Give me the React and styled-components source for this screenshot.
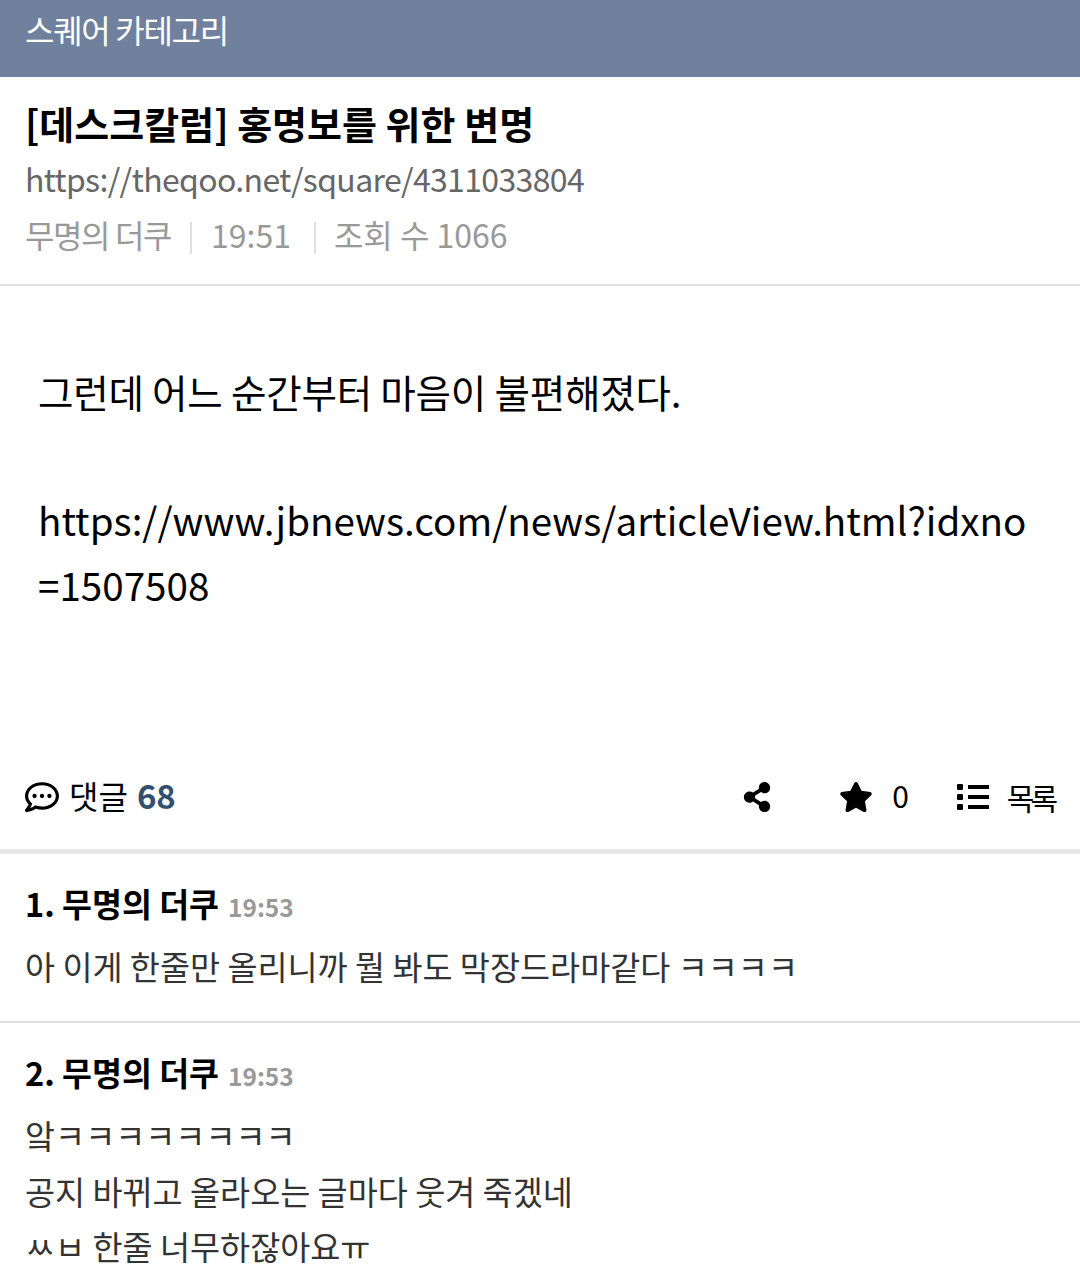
import React from 'react'
import styled, { createGlobalStyle } from 'styled-components'
import { FaRegCommentDots, FaShareAlt, FaStar } from 'react-icons/fa'

const Global = createGlobalStyle`
  html, body { margin: 0; padding: 0; background: #fff; }
  * { box-sizing: border-box; }
  body { font-family: "Noto Sans CJK KR", "Noto Sans", sans-serif; color: #000; }
`

const Page = styled.div`
  width: 1080px;
  height: 1283px;
  overflow: hidden;
`

const CategoryBar = styled.div`
  height: 77px;
  background: #6f819c;
  color: #fff;
  font-size: 32px;
  line-height: 58px;
  padding-left: 25px;
  letter-spacing: -1.3px;
`

const PostHead = styled.div`
  height: 209px;
  padding: 19px 25px 0;
  border-bottom: 2px solid #e0e0e0;
`

const Title = styled.div`
  font-size: 38px;
  font-weight: 700;
  line-height: 54px;
`

const Url = styled.div`
  font-size: 32px;
  line-height: 56px;
  color: #666;
  letter-spacing: -0.65px;
`

const Meta = styled.div`
  display: flex;
  align-items: center;
  font-size: 32px;
  line-height: 56px;
  color: #999;
`

const MetaName = styled.span`
  letter-spacing: -1.4px;
`

const MetaSep = styled.span`
  width: 2px;
  height: 32px;
  background: #e0e0e0;
  margin: 8px ${p => p.$right}px 0 ${p => p.$left}px;
`

const Body = styled.div`
  height: 480px;
  padding: 71px 38px 0;
  font-size: 38.6px;
  line-height: 65px;
  word-break: break-all;
`

const Sentence = styled.div`
  letter-spacing: -0.25px;
  margin: 2px 0 63px;
`

const ActionBar = styled.div`
  height: 62px;
  display: flex;
  align-items: center;
  padding: 0 26px 0 25px;
`

const CommentCount = styled.div`
  display: flex;
  align-items: center;
  font-size: 32px;
  flex: 1;
  margin-bottom: 4px;
  svg { font-size: 34px; margin: 4px 10px 0 0; }
  b { color: #34506f; margin-left: 9px; font-weight: 700; font-size: 33px; }
`

const ActionItem = styled.div`
  display: flex;
  align-items: center;
  font-size: 30px;
  margin-left: ${p => p.$left}px;
  svg { font-size: ${p => p.$icon}px; margin-right: ${p => p.$gap}px; }
`

const StarCount = styled.span`
  margin-bottom: 4px;
`

const ListLabel = styled.span`
  letter-spacing: -4px;
`

const ThickRule = styled.div`
  height: 5px;
  margin-top: 21px;
  background: #e8e8e8;
`

const Comment = styled.div`
  padding: 21px 25px 0;
  height: ${p => p.$h}px;
  border-bottom: ${p => (p.$last ? 'none' : '2px solid #e0e0e0')};
`

const CommentHead = styled.div`
  font-size: 32.5px;
  font-weight: 700;
  line-height: 56px;
  span { font-size: 24.5px; color: #999; margin-left: 9px; }
`

const CommentText = styled.div`
  font-size: 32.7px;
  line-height: 55.5px;
  color: #333;
  margin-top: 3px;
`

function ListIcon() {
  return (
    <svg width="32" height="26" viewBox="0 0 32 26" fill="currentColor">
      <rect x="0" y="0" width="6" height="6" rx="1" />
      <rect x="0" y="10" width="6" height="6" rx="1" />
      <rect x="0" y="20" width="6" height="6" rx="1" />
      <rect x="11" y="1" width="21" height="4" />
      <rect x="11" y="11" width="21" height="4" />
      <rect x="11" y="21" width="21" height="4" />
    </svg>
  )
}

export default function App() {
  return (
    <Page>
      <Global />
      <CategoryBar>스퀘어 카테고리</CategoryBar>
      <PostHead>
        <Title>[데스크칼럼] 홍명보를 위한 변명</Title>
        <Url>https://theqoo.net/square/4311033804</Url>
        <Meta>
          <MetaName>무명의 더쿠</MetaName>
          <MetaSep $left={19} $right={19} />
          19:51
          <MetaSep $left={23} $right={18} />
          조회 수 1066
        </Meta>
      </PostHead>
      <Body>
        <Sentence>그런데 어느 순간부터 마음이 불편해졌다.</Sentence>
        https://www.jbnews.com/news/articleView.html?idxno=1507508
      </Body>
      <ActionBar>
        <CommentCount>
          <FaRegCommentDots />
          댓글 <b>68</b>
        </CommentCount>
        <ActionItem $left={0} $icon={30} $gap={0}><FaShareAlt /></ActionItem>
        <ActionItem $left={67} $icon={34} $gap={19}><FaStar /><StarCount>0</StarCount></ActionItem>
        <ActionItem $left={48} $icon={34} $gap={18}><ListIcon /><ListLabel>목록</ListLabel></ActionItem>
      </ActionBar>
      <ThickRule />
      <Comment $h={169}>
        <CommentHead>1. 무명의 더쿠<span>19:53</span></CommentHead>
        <CommentText>아 이게 한줄만 올리니까 뭘 봐도 막장드라마같다 ㅋㅋㅋㅋ</CommentText>
      </Comment>
      <Comment $last $h={260}>
        <CommentHead>2. 무명의 더쿠<span>19:53</span></CommentHead>
        <CommentText>
          앜ㅋㅋㅋㅋㅋㅋㅋㅋ
          <br />
          공지 바뀌고 올라오는 글마다 웃겨 죽겠네
          <br />
          ㅆㅂ 한줄 너무하잖아요ㅠ
        </CommentText>
      </Comment>
    </Page>
  )
}
